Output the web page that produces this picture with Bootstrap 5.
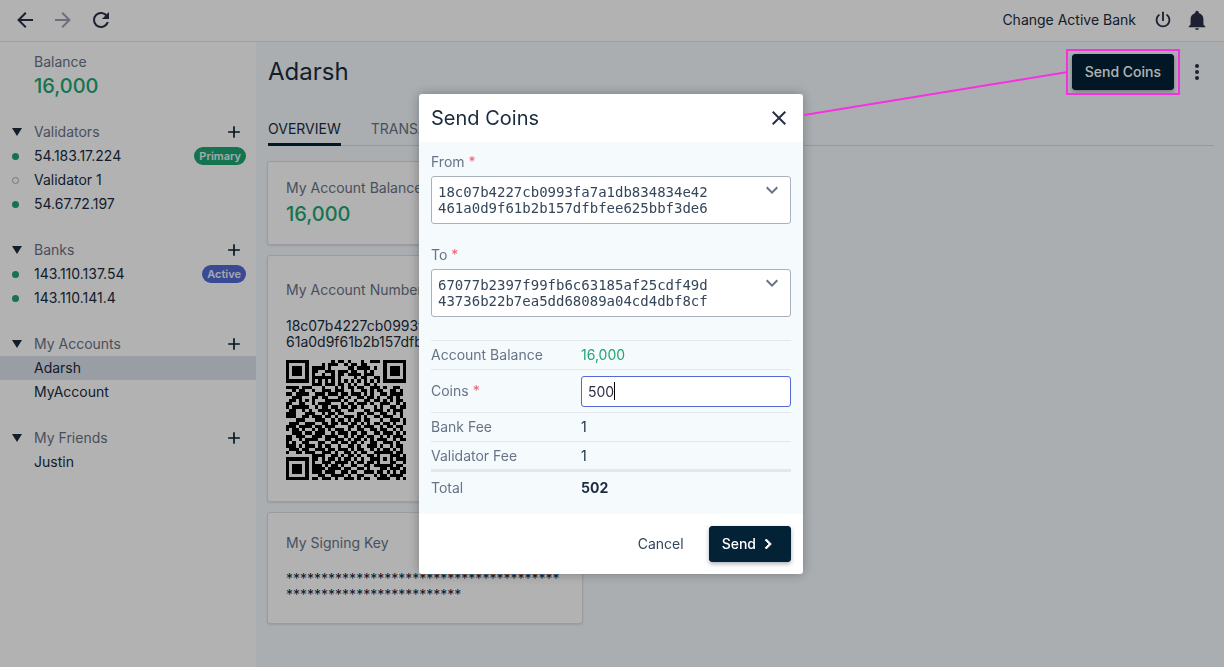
<!DOCTYPE html>
<html lang="en">
<head>
<meta charset="utf-8">
<meta name="viewport" content="width=device-width, initial-scale=1">
<title>Account Manager</title>
<link href="https://cdn.jsdelivr.net/npm/bootstrap@5.3.0/dist/css/bootstrap.min.css" rel="stylesheet">
<style>
  :root { --ink: #1a2c3d; --navy: #032235; --muted: #697386; --green: #1ea672; --line: #e3e8ee; --page: #f5fafd; }
  body { font-family: Inter, sans-serif; font-size: 14px; line-height: 20px; color: var(--ink); background: var(--page); }
  svg { fill: currentColor; display: block; flex: none; }
  .icon-btn { border: 0; background: none; padding: 0; color: #2a2f45; display: flex; }
  .icon-btn:disabled { color: #9a9fb0; }
  .topbar { height: 42px; border-bottom: 1px solid #dfe3e8; background: #fff; padding: 0 16px 2px 13px; }
  .topbar a, .side a { color: inherit; text-decoration: none; }
  .history { gap: 14px; }
  .side { width: 256px; background: #fff; padding-top: 10px; }
  .balance { padding-left: 34px; }
  .muted { color: var(--muted); }
  .amount { color: var(--green); font-size: 20px; line-height: 24px; font-weight: 500; }
  .balance .amount { margin-top: 2px; }
  .side-title { height: 24px; padding: 0 12px; }
  .side-title .icon-btn { color: var(--navy); }
  .side-row { height: 24px; padding: 0 10px 0 12px; }
  .side-row.current { background: #dce3ec; }
  .marker { width: 22px; }
  .dot { width: 7px; height: 7px; border-radius: 50%; background: var(--green); }
  .dot.off { background: none; border: 1px solid #a3acb9; }
  .pill { font-size: 11px; font-weight: 600; line-height: 18px; height: 18px; padding: 0 5px; border-radius: 9px; color: #e9f2fb; }
  .section { margin-top: 22px; }
  .page { padding: 12px 10px 20px 12px; }
  h1 { font-size: 24px; line-height: 36px; font-weight: 400; }
  .more { margin: 0 5px 0 11px; }
  .btn-navy { --bs-btn-color: #fff; --bs-btn-bg: var(--navy); --bs-btn-border-color: var(--navy); --bs-btn-hover-color: #fff; --bs-btn-hover-bg: #0a3350;
    --bs-btn-font-size: 14px; --bs-btn-font-weight: 500; --bs-btn-border-radius: 3px; --bs-btn-padding-y: 7px; --bs-btn-padding-x: 12px;
    line-height: 20px; box-shadow: 0 2px 4px rgba(26,31,54,.35); }
  .btn-navy svg { margin-left: 2px; }
  .tabs { gap: 30px; border-bottom: 1px solid #d5dbe1; margin-top: 29px; }
  .tabs a { color: var(--muted); text-decoration: none; text-transform: uppercase; padding-bottom: 4px; border-bottom: 3px solid transparent; margin-bottom: -1px; }
  .tabs a.active { color: var(--ink); border-color: var(--navy); }
  .panels { display: grid; gap: 10px; justify-content: start; grid-template-columns: 316px; margin: 15px 0 0 -1px; }
  .panel { background: #fff; border: 1px solid #dcdfe6; border-radius: 3px; padding: 16px 18px 18px; box-shadow: 0 1px 2px rgba(60,66,87,.15); }
  .panel.number { padding: 24px 18px 21px; }
  .panel.signing { padding: 20px 18px; }
  .tight { line-height: 16px; margin-top: 18px; }
  .qr { width: 120px; height: 120px; margin-top: 10px; fill: #000; }
  .highlight { position: absolute; inset: -5px -6px; border: 2px solid #f531e0; z-index: 1060; pointer-events: none; }
  .highlight svg { position: absolute; right: 100%; top: 20px; }
  .modal-backdrop { --bs-backdrop-opacity: .3; }
  .modal { --bs-modal-width: 384px; padding: 1px 2px 0 0; }
  .modal-content { border: 0; border-radius: 3px; color: var(--ink); box-shadow: 0 0 12px rgba(0,0,0,.3); }
  .modal-header { height: 48px; padding: 0 12px; border: 0; }
  .modal-title { font-size: 20px; line-height: 24px; font-weight: 400; }
  .modal-body { background: var(--page); padding: 10px 12px; }
  .modal-footer { padding: 12px; gap: 12px; border: 0; }
  .modal-footer > * { margin: 0; }
  .req { color: #ed5f74; }
  .field { margin-bottom: 21px; }
  .field label { margin-bottom: 4px; }
  .pick { display: grid; }
  .pick > * { grid-area: 1 / 1; }
  .pick select { height: 48px; width: 100%; appearance: none; border: 1px solid #a9b1bd; border-radius: 3px; background: #fff; color: transparent; font-size: 14px; padding: 0 36px 0 7px; }
  .pick output { font: 14px/16px "DejaVu Sans Mono", monospace; color: #34465a; padding: 8px 7px; pointer-events: none; }
  .pick svg { justify-self: end; margin: 2px 7px; color: #697386; pointer-events: none; }
  .totals { width: 100%; margin-top: 23px; }
  .totals th, .totals td { padding: 0; }
  .totals tr { border-top: 1px solid var(--line); height: 29px; }
  .totals tr.sum { border-top-width: 3px; height: 33px; }
  .totals tr.entry { height: 43px; }
  .totals th { width: 150px; font-weight: 400; color: var(--muted); }
  .totals .form-control { height: 31px; font-size: 14px; padding: 0 6px; border: 1px solid #5469d4; border-radius: 3px; color: #2a2f45; box-shadow: none;
    caret-color: transparent; background: linear-gradient(#000, #000) 32px center / 1px 18px no-repeat #fff; }
  .btn-plain { --bs-btn-font-size: 14px; --bs-btn-color: #34465a; --bs-btn-padding-x: 12px; --bs-btn-padding-y: 7px; line-height: 20px; }
</style>
</head>
<body class="min-vh-100 d-flex flex-column">

<header class="topbar d-flex align-items-center">
  <div class="history d-flex">
    <button class="icon-btn" aria-label="Back"><svg width="24" height="24" viewBox="0 0 24 24"><path d="M20,11V13H8L13.5,18.5L12.08,19.92L4.16,12L12.08,4.08L13.5,5.5L8,11H20Z"/></svg></button>
    <button class="icon-btn" aria-label="Forward" disabled><svg width="24" height="24" viewBox="0 0 24 24"><path d="M4,11V13H16L10.5,18.5L11.92,19.92L19.84,12L11.92,4.08L10.5,5.5L16,11H4Z"/></svg></button>
    <button class="icon-btn" aria-label="Reload"><svg width="24" height="24" viewBox="0 0 24 24"><path d="M17.65,6.35C16.2,4.9 14.21,4 12,4A8,8 0 0,0 4,12A8,8 0 0,0 12,20C15.73,20 18.84,17.45 19.73,14H17.65C16.83,16.33 14.61,18 12,18A6,6 0 0,1 6,12A6,6 0 0,1 12,6C13.66,6 15.14,6.69 16.22,7.78L13,11H20V4L17.65,6.35Z"/></svg></button>
  </div>
  <a href="#" class="ms-auto">Change Active Bank</a>
  <button class="icon-btn ms-3" aria-label="Power"><svg width="22" height="22" viewBox="0 0 24 24"><path d="M16.56,5.44L15.11,6.89C16.84,7.94 18,9.83 18,12A6,6 0 0,1 12,18A6,6 0 0,1 6,12C6,9.83 7.16,7.94 8.88,6.88L7.44,5.44C5.36,6.88 4,9.28 4,12A8,8 0 0,0 12,20A8,8 0 0,0 20,12C20,9.28 18.64,6.88 16.56,5.44M13,3H11V13H13"/></svg></button>
  <button class="icon-btn ms-2 ps-1" aria-label="Notifications"><svg width="22" height="22" viewBox="0 0 24 24"><path d="M21,19V20H3V19L5,17V11C5,7.9 7.03,5.17 10,4.29C10,4.19 10,4.1 10,4A2,2 0 0,1 12,2A2,2 0 0,1 14,4C14,4.1 14,4.19 14,4.29C16.97,5.17 19,7.9 19,11V17L21,19M14,21A2,2 0 0,1 12,23A2,2 0 0,1 10,21"/></svg></button>
</header>

<div class="d-flex flex-grow-1">
  <nav class="side flex-shrink-0">
    <div class="balance"><div class="muted">Balance</div><div class="amount">16,000</div></div>

    <div class="section">
      <div class="side-title d-flex align-items-center"><span class="marker"><svg width="10" height="8"><path d="M0 0H10L5 8Z"/></svg></span><span class="muted me-auto">Validators</span><button class="icon-btn" aria-label="Add validator"><svg width="20" height="20" viewBox="0 0 24 24"><path d="M19,13H13V19H11V13H5V11H11V5H13V11H19V13Z"/></svg></button></div>
      <div class="side-row d-flex align-items-center"><span class="marker"><i class="dot d-block"></i></span><a href="#" class="me-auto">54.183.17.224</a><span class="pill" style="background:#1ea672">Primary</span></div>
      <div class="side-row d-flex align-items-center"><span class="marker"><i class="dot off d-block"></i></span><a href="#">Validator 1</a></div>
      <div class="side-row d-flex align-items-center"><span class="marker"><i class="dot d-block"></i></span><a href="#">54.67.72.197</a></div>
    </div>

    <div class="section">
      <div class="side-title d-flex align-items-center"><span class="marker"><svg width="10" height="8"><path d="M0 0H10L5 8Z"/></svg></span><span class="muted me-auto">Banks</span><button class="icon-btn" aria-label="Add bank"><svg width="20" height="20" viewBox="0 0 24 24"><path d="M19,13H13V19H11V13H5V11H11V5H13V11H19V13Z"/></svg></button></div>
      <div class="side-row d-flex align-items-center"><span class="marker"><i class="dot d-block"></i></span><a href="#" class="me-auto">143.110.137.54</a><span class="pill" style="background:#5469d4">Active</span></div>
      <div class="side-row d-flex align-items-center"><span class="marker"><i class="dot d-block"></i></span><a href="#">143.110.141.4</a></div>
    </div>

    <div class="section">
      <div class="side-title d-flex align-items-center"><span class="marker"><svg width="10" height="8"><path d="M0 0H10L5 8Z"/></svg></span><span class="muted me-auto">My Accounts</span><button class="icon-btn" aria-label="Add account"><svg width="20" height="20" viewBox="0 0 24 24"><path d="M19,13H13V19H11V13H5V11H11V5H13V11H19V13Z"/></svg></button></div>
      <div class="side-row current d-flex align-items-center"><span class="marker"></span><a href="#">Adarsh</a></div>
      <div class="side-row d-flex align-items-center"><span class="marker"></span><a href="#">MyAccount</a></div>
    </div>

    <div class="section">
      <div class="side-title d-flex align-items-center"><span class="marker"><svg width="10" height="8"><path d="M0 0H10L5 8Z"/></svg></span><span class="muted me-auto">My Friends</span><button class="icon-btn" aria-label="Add friend"><svg width="20" height="20" viewBox="0 0 24 24"><path d="M19,13H13V19H11V13H5V11H11V5H13V11H19V13Z"/></svg></button></div>
      <div class="side-row d-flex align-items-center"><span class="marker"></span><a href="#">Justin</a></div>
    </div>
  </nav>

  <main class="page flex-grow-1">
    <div class="d-flex align-items-center">
      <h1 class="m-0 me-auto">Adarsh</h1>
      <div class="position-relative">
        <button class="btn btn-navy d-block">Send Coins</button>
        <div class="highlight"><svg width="264" height="46" fill="none"><path d="M0 44L264 1" stroke="#f531e0" stroke-width="2"/></svg></div>
      </div>
      <button class="icon-btn more" aria-label="More"><svg width="24" height="24" viewBox="0 0 24 24"><circle cx="12" cy="6" r="2"/><circle cx="12" cy="12" r="2"/><circle cx="12" cy="18" r="2"/></svg></button>
    </div>

    <div class="tabs d-flex"><a href="#" class="active">Overview</a><a href="#">Transactions</a></div>

    <div class="panels">
      <section class="panel">
        <div class="muted">My Account Balance</div>
        <div class="amount mt-1">16,000</div>
      </section>
      <section class="panel number">
        <div class="muted">My Account Number</div>
        <div class="tight">18c07b4227cb0993fa7a1db834834e424<br>61a0d9f61b2b157dfbfee625bbf3de6</div>
        <svg class="qr" viewBox="0 0 37 37" shape-rendering="crispEdges" role="img" aria-label="Account QR code"><path id="qr"/></svg>
      </section>
      <section class="panel signing">
        <div class="muted">My Signing Key</div>
        <div class="tight">***************************************<br>*************************</div>
      </section>
    </div>
  </main>
</div>

<div class="modal-backdrop show"></div>
<div class="modal d-block" role="dialog" aria-modal="true" aria-labelledby="sendTitle">
  <div class="modal-dialog modal-dialog-centered">
    <form class="modal-content">
      <div class="modal-header">
        <h2 class="modal-title" id="sendTitle">Send Coins</h2>
        <button type="button" class="icon-btn" aria-label="Close"><svg width="24" height="24" viewBox="0 0 24 24"><path d="M19,6.41L17.59,5L12,10.59L6.41,5L5,6.41L10.59,12L5,17.59L6.41,19L12,13.41L17.59,19L19,17.59L13.41,12L19,6.41Z"/></svg></button>
      </div>
      <div class="modal-body">
        <div class="field">
          <label class="d-block muted" for="from">From <span class="req">*</span></label>
          <div class="pick">
            <select id="from"><option value="18c07b42" aria-label="Adarsh"></option></select>
            <output for="from">18c07b4227cb0993fa7a1db834834e42<br>461a0d9f61b2b157dfbfee625bbf3de6</output>
            <svg width="24" height="24" viewBox="0 0 24 24"><path d="M7.41,8.58L12,13.17L16.59,8.58L18,10L12,16L6,10L7.41,8.58Z"/></svg>
          </div>
        </div>
        <div class="field">
          <label class="d-block muted" for="to">To <span class="req">*</span></label>
          <div class="pick">
            <select id="to"><option value="67077b23" aria-label="Justin"></option></select>
            <output for="to">67077b2397f99fb6c63185af25cdf49d<br>43736b22b7ea5dd68089a04cd4dbf8cf</output>
            <svg width="24" height="24" viewBox="0 0 24 24"><path d="M7.41,8.58L12,13.17L16.59,8.58L18,10L12,16L6,10L7.41,8.58Z"/></svg>
          </div>
        </div>
        <table class="totals">
          <tr><th scope="row">Account Balance</th><td style="color:#1ea672">16,000</td></tr>
          <tr class="entry"><th scope="row"><label for="coins">Coins <span class="req">*</span></label></th><td><input class="form-control" id="coins" type="text" inputmode="numeric" value="500"></td></tr>
          <tr><th scope="row">Bank Fee</th><td>1</td></tr>
          <tr><th scope="row">Validator Fee</th><td>1</td></tr>
          <tr class="sum"><th scope="row">Total</th><td class="fw-bold">502</td></tr>
        </table>
      </div>
      <div class="modal-footer">
        <button type="button" class="btn btn-plain">Cancel</button>
        <button type="submit" class="btn btn-navy d-flex align-items-center">Send<svg width="20" height="20" viewBox="0 0 24 24"><path d="M8.59,16.58L13.17,12L8.59,7.41L10,6L16,12L10,18L8.59,16.58Z" stroke="currentColor"/></svg></button>
      </div>
    </form>
  </div>
</div>

<script src="https://cdn.jsdelivr.net/npm/bootstrap@5.3.0/dist/js/bootstrap.bundle.min.js"></script>
<script>
  // One string per row of the account's QR code, 1 for a dark module.
  const rows = [
    '1111111000000010110100010011101111111',
    '1000001000010111001011011000001000001',
    '1011101011110100000110111101001011101',
    '1011101011001110111011001010001011101',
    '1011101010010010110111101110001011101',
    '1000001011111110100001011001101000001',
    '1111111010101010101010101010101111111',
    '0000000011101110110101001101000000000',
    '1111011100010001010110110011101001100',
    '0010110010011101110010011010110011010',
    '1101111001110111011011101010011011110',
    '0011100011011000110100110110100110100',
    '0110101010001111101001001101101010110',
    '1100110010111100010110111010011100101',
    '1011111001011011011011010001010011011',
    '0110010100111101100110001101110101110',
    '1110001110010110110000110110011001010',
    '1110011011101101001110101001101110010',
    '0001110001110010110101101100010011101',
    '0111001110011011011011010101101101001',
    '1110111101101110000110101110010110110',
    '1011010010110101110100110011011001010',
    '0011101101110010111011011001101110101',
    '1101110011101111001010110110010101110',
    '1100101111001101110101101010111001011',
    '1010011000110011011011010011001110100',
    '1110101110101100100110100111010010110',
    '0111011001110110111010110010101101010',
    '1001101110011101001101011001111110110',
    '0000000011110011010110100110100011101',
    '1111111011010110101101010011101010111',
    '1000001010011101111010110110100011001',
    '1011101011101011010011001101111110110',
    '1011101011110111101100110100011011101',
    '1011101011101110011011001110110101011',
    '1000001000110011110100110001011011110',
    '1111111011011101001110101100111100101'
  ];
  document.getElementById('qr').setAttribute('d', rows.map((row, y) =>
    [...row].map((m, x) => m === '1' ? `M${x} ${y}h1v1h-1z` : '').join('')).join(''));

  const coins = document.getElementById('coins');
  coins.focus();
  coins.setSelectionRange(3, 3);
</script>
</body>
</html>
